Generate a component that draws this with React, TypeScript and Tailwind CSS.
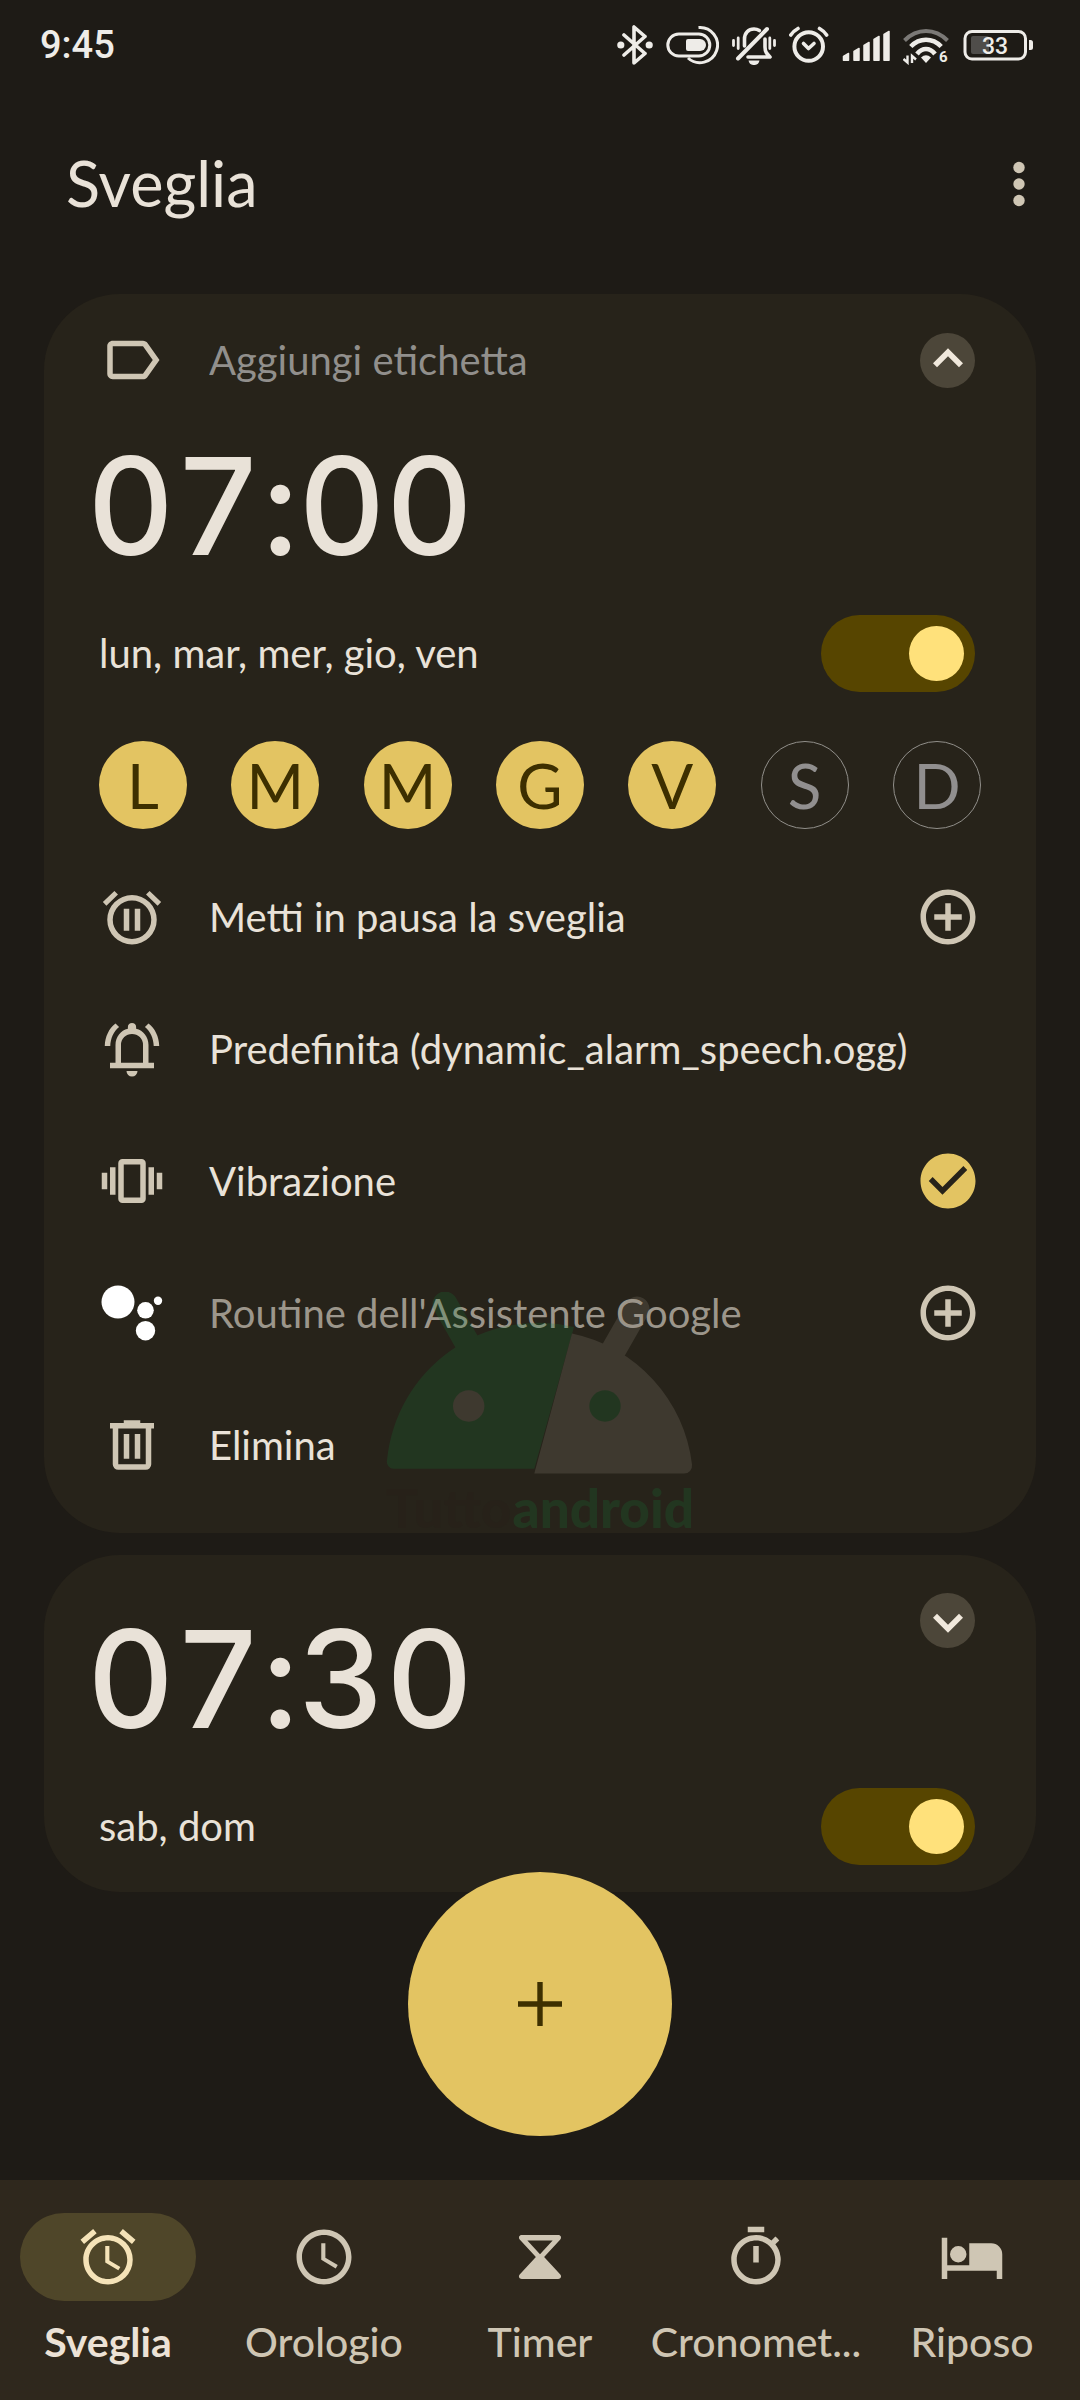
import React, { useState } from 'react';
import {
  MdAccessTime,
  MdAddCircleOutline,
  MdAlarm,
  MdCheckCircle,
  MdLabelOutline,
  MdOutlineTimer,
} from 'react-icons/md';

interface Day {
  letter: string;
  name: string;
  active: boolean;
}

const DAYS: Day[] = [
  { letter: 'L', name: 'lunedì', active: true },
  { letter: 'M', name: 'martedì', active: true },
  { letter: 'M', name: 'mercoledì', active: true },
  { letter: 'G', name: 'giovedì', active: true },
  { letter: 'V', name: 'venerdì', active: true },
  { letter: 'S', name: 'sabato', active: false },
  { letter: 'D', name: 'domenica', active: false },
];

/* Status bar icons */

const StatusIcons = () => (
  <div className="flex items-center gap-[13px] text-[#eeece8]" aria-hidden="true">
    {/* Bluetooth */}
    <svg className="h-10 w-9" viewBox="0 0 36 40" fill="none" stroke="currentColor">
      <path d="M7 30 28 11.500 17 2v36l11-9.500L7 10" strokeWidth="3.600" strokeLinejoin="round" strokeLinecap="round" />
      <circle cx="3.800" cy="20" r="3.600" fill="currentColor" stroke="none" />
      <circle cx="32.200" cy="20" r="3.600" fill="currentColor" stroke="none" />
    </svg>
    {/* Connected device battery */}
    <svg className="h-10 w-[53px]" viewBox="0 0 53 40" fill="none" stroke="currentColor" strokeWidth="3">
      <rect x="1.800" y="9" width="42" height="22" rx="11" />
      <path d="M32.500 2.500A17.600 17.600 0 1 1 22 33" />
      <path d="M22 14h12a6 6 0 0 1 0 12H22a2 2 0 0 1-2-2v-8a2 2 0 0 1 2-2z" fill="currentColor" stroke="none" />
    </svg>
    {/* Muted bell */}
    <svg className="h-10 w-11" viewBox="0 0 44 40" fill="none" stroke="currentColor" strokeLinecap="round">
      <path d="M35 4 6 33.500" strokeWidth="4" />
      <path d="M12.500 21v-7c0-6 4-10 9.500-10 2 0 3.800.5 5.300 1.500M33 14v8c0 5 2 7 5 10H16" strokeWidth="3.600" strokeLinejoin="round" />
      <path d="M16.500 35.500h11a5.600 5.600 0 0 1-11 0z" fill="currentColor" stroke="none" />
      <path d="M1.500 15.500v5M6.200 13v10.500M37.800 13v10.500M42.500 15.500v5" strokeWidth="2.800" />
    </svg>
    {/* Alarm set */}
    <svg className="size-10" viewBox="0 0 40 40" fill="none" stroke="currentColor" strokeLinecap="round">
      <circle cx="19.700" cy="21.500" r="14.300" strokeWidth="4" />
      <path d="m14.500 18.500 5 5 5.500-5" strokeWidth="3.600" strokeLinejoin="round" />
      <path d="M1.800 10Q4.500 6 9 3.500M37.600 10Q35 6 30.500 3.500" strokeWidth="3.600" />
    </svg>
    {/* Mobile signal */}
    <svg className="h-10 w-12" viewBox="0 0 48 40" fill="currentColor" stroke="currentColor" strokeWidth="1.500" strokeLinejoin="round">
      <path d="M1.500 31.500 6.500 28.500V35.300h-5zM12 26.500l5-3v11.800h-5zM22 20.500l5-3v17.800h-5zM32 14.500l5-3v23.800h-5zM42 9.500l5-3v28.800h-5z" />
    </svg>
    {/* Wi-Fi 6 */}
    <svg className="h-10 w-[47px]" viewBox="0 0 47 40" fill="none" stroke="currentColor">
      <path d="M1.500 15.500q9.500-9.500 21.500-9.500t21.500 9.500" stroke="#7b7976" strokeWidth="4" />
      <path d="M7.800 21.500q6.500-6.700 15.200-6.700t15.200 6.700M14 29q4-5 9-5t9 5" strokeWidth="4.600" />
      <path d="M23 38l-5-5.500q5-4.500 10 0z" fill="currentColor" stroke="none" />
      <path d="M4.500 30.500v7l-4-3.500M9 38v-7l4 3.500" strokeWidth="2.400" />
      <text x="36" y="37" className="font-['Roboto'] text-[15px] leading-none font-bold" fill="currentColor" stroke="none">6</text>
    </svg>
    {/* Battery */}
    <svg className="h-10 w-[70px]" viewBox="0 0 70 40" fill="none">
      <rect x="8" y="11" width="18" height="18" rx="2" fill="#4f4d4a" />
      <rect x="2" y="6.500" width="60.500" height="27.500" rx="7" stroke="currentColor" strokeWidth="3" />
      <path d="M66 15h1.500a2.500 2.500 0 0 1 2.500 2.500v5a2.500 2.500 0 0 1-2.500 2.500H66z" fill="currentColor" />
      <text x="32" y="28.500" textAnchor="middle" className="font-['Roboto'] text-[23px] font-medium" fill="currentColor">33</text>
    </svg>
  </div>
);

/* Icons of the alarm card and of the bottom bar */

const Icon = ({ d }: { d: string }) => (
  <svg className="size-[66px] shrink-0" viewBox="0 0 24 24" fill="currentColor" fillRule="evenodd" aria-hidden="true">
    <path d={d} />
  </svg>
);

const PAUSE =
  'M12 4a9 9 0 1 0 0 18 9 9 0 0 0 0-18zm0 2a7 7 0 1 1 0 14 7 7 0 0 1 0-14zM9 9h2v8H9zM13 9h2v8h-2zM1.400 6.500 5.600 2.500l1.300 1.300-4.200 4.100zM22.600 6.500 18.400 2.500l-1.300 1.300 4.200 4.100z';
const BELL =
  'M18 17v-6.500c0-3-1.900-5.300-4.500-5.900V4a1.500 1.500 0 0 0-3 0v.6C7.900 5.200 6 7.500 6 10.500V17H4v2h16v-2zM16 17H8v-6.500a4 4 0 0 1 8 0zM12 22a2 2 0 0 0 2-2h-4a2 2 0 0 0 2 2zM7.300 4 6 2.700C3.600 4.500 2.200 7.500 2.100 10.900h2C4.200 8.200 5.300 5.600 7.300 4zM16.700 4 18 2.700c2.400 1.800 3.800 4.800 3.900 8.200h-2c-.1-2.700-1.200-5.300-3.200-6.900z';
const VIBRATE =
  'M1 9h2v6H1zM4 7h2v10H4zM18 7h2v10h-2zM21 9h2v6h-2zM8.500 4h7A1.500 1.500 0 0 1 17 5.500v13a1.500 1.500 0 0 1-1.500 1.500h-7A1.500 1.500 0 0 1 7 18.500v-13A1.500 1.500 0 0 1 8.500 4zM9 6v12h6V6z';
const TRASH =
  'M7 21q-.825 0-1.412-.587T5 19V6H4V4h5V3h6v1h5v2h-1v13q0 .825-.587 1.413T17 21zM17 6H7v13h10zM9 17h2V8H9zm4 0h2V8h-2z';
const HOURGLASS =
  'M5.400 4h13.200c1 0 1.400 1 .7 1.700L13.500 12l5.800 6.300c.7.7.3 1.700-.7 1.700H5.400c-1 0-1.400-1-.7-1.700L10.500 12 4.700 5.700C4 5 4.400 4 5.400 4zM7.400 6h9.200L12 11z';
const BED =
  'M1 5h2v10h8V7h8a4 4 0 0 1 4 4v9h-2v-3H3v3H1zM7 8a3 3 0 1 0 0 6 3 3 0 0 0 0-6z';

const AssistantIcon = () => (
  <svg className="size-[66px] shrink-0" viewBox="0 0 66 66" fill="#fff" aria-hidden="true">
    <circle cx="19" cy="22" r="16.500" />
    <circle cx="46.500" cy="30.300" r="8.300" />
    <circle cx="59" cy="20.700" r="4.200" />
    <circle cx="46.500" cy="50.700" r="9.700" />
  </svg>
);

const Watermark = () => (
  <div className="pointer-events-none absolute bottom-0 left-1/2 w-[308px] -translate-x-1/2 opacity-20" aria-hidden="true">
    <svg className="block w-full" viewBox="0 0 308 183" fill="none">
      <g fill="#13823a" stroke="none">
        <path d="M8 176.700a7 7 0 0 1-7-8.500A152 152 0 0 1 188 35L148.300 176.700z" />
        <path d="m59 12 24 42" stroke="#13823a" strokeWidth="25" strokeLinecap="round" />
      </g>
      <path d="M186 41.600a152 152 0 0 1 120 131 8 8 0 0 1-8 9H148.300z" fill="#9a9183" />
      <path d="m251 17-24 42" stroke="#9a9183" strokeWidth="25" strokeLinecap="round" />
      <circle cx="82.700" cy="114" r="15.700" fill="#9a9183" />
      <circle cx="219" cy="114" r="15.700" fill="#13823a" />
    </svg>
    <p className="flex justify-between pt-2 font-['Lato'] text-[53px] leading-[50px] font-black text-[#13823a]">
      <span className="text-[#271d17]">Tutto</span>
      <span>android</span>
    </p>
  </div>
);

/* Controls */

const ChevronButton = ({ open }: { open: boolean }) => (
  <button
    type="button"
    aria-label={open ? 'Comprimi sveglia' : 'Espandi sveglia'}
    className="flex size-[55px] shrink-0 items-center justify-center rounded-full bg-[#4c4639] text-[#f0e8dc]"
  >
    <svg className="size-[60px] shrink-0" viewBox="0 0 24 24" fill="currentColor" aria-hidden="true">
      <path d={open ? 'M12 7.300l-6 6 1.600 1.600 4.400-4.400 4.400 4.400 1.600-1.600z' : 'M12 16.700l-6-6 1.600-1.600 4.400 4.400 4.400-4.400 1.600 1.600z'} />
    </svg>
  </button>
);

const Switch = ({ label }: { label: string }) => {
  const [on, setOn] = useState(true);
  return (
    <label className="relative flex h-[77px] w-[154px] shrink-0 cursor-pointer items-center rounded-full bg-[#574500] px-[11px]">
      <input
        type="checkbox"
        role="switch"
        aria-label={label}
        checked={on}
        onChange={() => setOn(!on)}
        className="peer sr-only"
      />
      <span className="size-[55px] rounded-full bg-[#ffe17b] peer-checked:ml-auto" />
    </label>
  );
};

const DayPicker = () => {
  const [days, setDays] = useState(DAYS);
  const toggle = (idx: number) =>
    setDays(days.map((d, i) => (i === idx ? { ...d, active: !d.active } : d)));
  return (
    <div className="flex justify-between py-[22px]">
      {days.map((day, idx) => (
        <button
          key={day.name}
          type="button"
          aria-label={day.name}
          aria-pressed={day.active}
          onClick={() => toggle(idx)}
          className={`flex size-[88px] items-center justify-center rounded-full text-[62px] leading-none ${
            day.active ? 'bg-[#e3c462] text-[#3d2f00]' : 'border border-[#918f8a] text-[#918f8f]'
          }`}
        >
          {day.letter}
        </button>
      ))}
    </div>
  );
};

interface RowProps {
  icon: React.ReactNode;
  children: React.ReactNode;
  action?: React.ReactNode;
}

const Row = ({ icon, children, action }: RowProps) => (
  <div className="flex h-[132px] items-center pr-[6px]">
    <span className="mr-[44px] text-[#cfc6b4]">{icon}</span>
    <div className="min-w-0 flex-1">{children}</div>
    {action}
  </div>
);

const AddButton = ({ label }: { label: string }) => (
  <button type="button" aria-label={label} className="-mr-[6px] text-[#cfc6b4]">
    <MdAddCircleOutline className="size-[66px]" />
  </button>
);

const VibrateCheckbox = () => {
  const [on, setOn] = useState(true);
  return (
    <label className="relative -mr-[6px] cursor-pointer">
      <input
        type="checkbox"
        aria-label="Vibrazione"
        checked={on}
        onChange={() => setOn(!on)}
        className="sr-only"
      />
      {on ? (
        <MdCheckCircle className="size-[66px] text-[#e3c462]" />
      ) : (
        <MdAddCircleOutline className="size-[66px] text-[#cfc6b4]" />
      )}
    </label>
  );
};

const Time = ({ children }: { children: string }) => (
  <h2 className="-ml-3 font-['Inter'] text-[135px] leading-[161px] font-medium tabular-nums [font-variant-ligatures:no-contextual]">
    {children}
  </h2>
);

const Schedule = ({ days, time }: { days: string; time: string }) => (
  <div className="flex h-[132px] items-center justify-between pr-[6px]">
    <p>{days}</p>
    <Switch label={`Sveglia delle ${time}`} />
  </div>
);

const NAV_ITEMS = [
  { label: 'Sveglia', icon: <MdAlarm className="size-[66px]" /> },
  { label: 'Orologio', icon: <MdAccessTime className="size-[66px]" /> },
  { label: 'Timer', icon: <Icon d={HOURGLASS} /> },
  { label: 'Cronomet...', icon: <MdOutlineTimer className="size-[66px]" /> },
  { label: 'Riposo', icon: <Icon d={BED} /> },
];

const BottomNav = () => (
  <nav className="sticky bottom-0 bg-[#2f281d]">
    <button
      type="button"
      aria-label="Aggiungi sveglia"
      className="absolute bottom-full left-1/2 mb-11 flex size-[264px] -translate-x-1/2 items-center justify-center rounded-full bg-[#e3c462] text-[#3d2f00]"
    >
      <svg className="size-11" viewBox="0 0 44 44" fill="currentColor" aria-hidden="true">
        <path d="M19.300 0h5.400v19.300H44v5.400H24.700V44h-5.400V24.700H0v-5.400h19.300z" />
      </svg>
    </button>
    <ul className="grid h-[220px] grid-cols-5 pt-[33px] text-[41px]">
      {NAV_ITEMS.map((item, idx) => (
        <li key={item.label}>
          <a
            href="#"
            aria-current={idx === 0 ? 'page' : undefined}
            className={`flex flex-col items-center gap-4 ${
              idx === 0 ? 'font-bold text-[#ece2d6]' : 'font-medium text-[#cfc6b4]'
            }`}
          >
            <span
              className={`flex h-[88px] w-[176px] items-center justify-center rounded-full ${
                idx === 0 ? 'bg-[#4f4629] text-[#f5e3b8]' : ''
              }`}
            >
              {item.icon}
            </span>
            <span className="leading-[50px] whitespace-nowrap">{item.label}</span>
          </a>
        </li>
      ))}
    </ul>
  </nav>
);

const App: React.FC = () => (
  <div className="flex min-h-screen flex-col bg-[#1e1b16] font-['Lato',sans-serif] text-[40px] leading-[50px] text-[#e9e2d8]">
    <header>
      <div className="flex h-[90px] items-center justify-between pr-[47px] pl-10 text-[#eeece8]">
        <span className="font-['Roboto'] text-[38px] font-medium">9:45</span>
        <StatusIcons />
      </div>
      <div className="flex h-[204px] items-center justify-between pb-[18px] pl-[66px]">
        <h1 className="text-[63px] leading-[80px]">Sveglia</h1>
        <button type="button" aria-label="Altre opzioni" className="mr-7 text-[#cfc6b4]">
          <svg className="size-[66px]" viewBox="0 0 66 66" fill="currentColor" aria-hidden="true">
            <circle cx="33" cy="17.500" r="5.700" />
            <circle cx="33" cy="34" r="5.700" />
            <circle cx="33" cy="50.500" r="5.700" />
          </svg>
        </button>
      </div>
    </header>

    <main className="flex flex-1 flex-col gap-[22px] px-11">
      <section className="relative rounded-[76px] bg-[#27231a] px-[55px] pb-[22px]">
        <Row icon={<MdLabelOutline className="size-[66px]" />} action={<ChevronButton open />}>
          <input
            type="text"
            aria-label="Etichetta"
            placeholder="Aggiungi etichetta"
            className="w-full bg-transparent outline-none placeholder:text-[#918f8c]"
          />
        </Row>
        <Time>07:00</Time>
        <Schedule days="lun, mar, mer, gio, ven" time="07:00" />
        <DayPicker />
        <Row icon={<Icon d={PAUSE} />} action={<AddButton label="Metti in pausa" />}>
          Metti in pausa la sveglia
        </Row>
        <Row icon={<Icon d={BELL} />}>Predefinita (dynamic_alarm_speech.ogg)</Row>
        <Row icon={<Icon d={VIBRATE} />} action={<VibrateCheckbox />}>
          Vibrazione
        </Row>
        <Row icon={<AssistantIcon />} action={<AddButton label="Aggiungi routine" />}>
          <span className="text-[#9c968b]">Routine dell&apos;Assistente Google</span>
        </Row>
        <Row icon={<Icon d={TRASH} />}>Elimina</Row>
        <Watermark />
      </section>

      <section className="rounded-[76px] bg-[#27231a] px-[55px]">
        <div className="flex items-start justify-between pt-[38px] pr-[6px]">
          <div className="pt-[6px]">
            <Time>07:30</Time>
          </div>
          <ChevronButton open={false} />
        </div>
        <Schedule days="sab, dom" time="07:30" />
      </section>
    </main>

    <BottomNav />
  </div>
);

export default App;
